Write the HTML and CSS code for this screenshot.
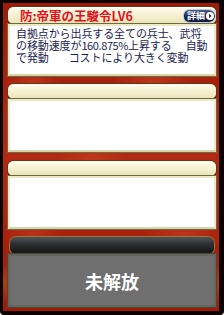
FILE: index.html
```html
<!DOCTYPE html>
<html lang="ja">
<head>
<meta charset="utf-8">
<link rel="stylesheet" href="styles.css">
</head>
<body>
<div class="card">
  <div class="frame">
    <div class="pill title-pill">
      <span class="title">防:帝軍の王駿令LV6</span>
      <span class="detail-btn">詳細<span class="arrow"><svg width="8" height="8" viewBox="0 0 8 8"><circle cx="4" cy="4" r="4" fill="#fff"/><path d="M3 1.8 L5.6 4 L3 6.2 Z" fill="#1a2a5a"/></svg></span></span>
    </div>
    <div class="box desc">自拠点から出兵する全ての兵士、武将<br>の移動速度が<span class="num">160.875%</span>上昇する<span class="sp"></span>自動<br>で発動<span class="sp sp2"></span>コストにより大きく変動</div>
    <div class="pill gap1"></div>
    <div class="box"></div>
    <div class="pill gap2"></div>
    <div class="box"></div>
    <div class="pill dark"></div>
    <div class="box locked">未解放</div>
  </div>
</div>
</body>
</html>
```

FILE: styles.css
```css
* { box-sizing: border-box; }
html, body { margin: 0; padding: 0; background: #fff; }
body { font-family: "Noto Sans CJK JP", "Noto Sans", sans-serif; }

.card {
  width: 224px;
  height: 315px;
  background: #0c0202;
  padding: 3px 5px 4px 3px;
  border-radius: 0 0 4px 4px;
}

.frame {
  height: 100%;
  padding: 4px 3px 4px 5px;
  display: flex;
  flex-direction: column;
  background:
    radial-gradient(ellipse 40px 20px at 30px 80px, rgba(230,90,50,0.35), transparent 70%),
    radial-gradient(ellipse 60px 30px at 150px 78px, rgba(230,90,50,0.35), transparent 70%),
    radial-gradient(ellipse 50px 22px at 90px 156px, rgba(230,90,50,0.3), transparent 70%),
    radial-gradient(ellipse 60px 24px at 180px 232px, rgba(230,90,50,0.35), transparent 70%),
    radial-gradient(ellipse 40px 24px at 30px 232px, rgba(230,90,50,0.3), transparent 70%),
    radial-gradient(ellipse 30px 30px at 6px 280px, rgba(220,170,60,0.25), transparent 70%),
    radial-gradient(ellipse 30px 30px at 214px 280px, rgba(220,170,60,0.25), transparent 70%),
    linear-gradient(#a01a08, #b22812 50%, #a01a08);
}

.pill {
  height: 15px;
  border-radius: 6px / 5px;
  background: linear-gradient(#fffdf0, #f4efce 55%, #e9e2b6);
  box-shadow: 0 1px 0 #1a0a04, 0 0 0 1px #5a3a1a;
  flex: none;
}

.gap1 { margin-top: 8px; }
.gap2 { margin-top: 9px; }

.title-pill {
  height: 17px;
  display: flex;
  align-items: center;
  justify-content: space-between;
  padding: 0 1px 0 12px;
}

.title {
  color: #e4101c;
  font-size: 12.5px;
  font-weight: bold;
  line-height: 17px;
}

.detail-btn {
  width: 31px;
  height: 12px;
  border-radius: 5px 6px 6px 5px;
  background: linear-gradient(#4a5a8a, #1c2c5c 50%, #0c1638);
  color: #fff;
  font-size: 9px;
  font-weight: bold;
  line-height: 12px;
  display: flex;
  align-items: center;
  padding-left: 3px;
  gap: 1px;
  box-shadow: 0 0 0 1px #c8d0e0;
}

.arrow { display: flex; }

.box {
  height: 53px;
  background: #fff;
  border: 2px solid #eceac4;
  border-bottom-color: #d6d3a8;
  box-shadow: 0 0 0 1px #6c6a40;
  flex: none;
}

.desc {
  height: 52px;
  padding: 1px 0 0 6px;
  color: #1a2350;
  font-size: 11px;
  line-height: 12px;
  white-space: nowrap;
  letter-spacing: -0.1px;
}

.num { letter-spacing: -0.4px; }

.sp {
  display: inline-block;
  width: 14px;
}

.sp2 { width: 20px; }

.dark {
  height: 17px;
  margin: 8px 2px 0;
  background: linear-gradient(#505458, #2a2c30 45%, #141414);
  box-shadow: 0 0 0 1px #8c7a34;
  border-radius: 6px;
}

.locked {
  background: #6f6f6f;
  border: 2px solid #666660;
  box-shadow: 0 0 0 1px #4a4a34;
  color: #fff;
  font-size: 18px;
  font-weight: bold;
  display: flex;
  align-items: center;
  justify-content: center;
}
```
